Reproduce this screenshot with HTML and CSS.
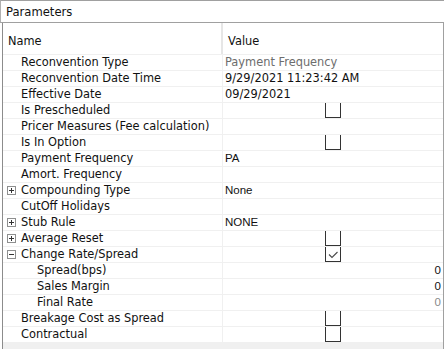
FILE: index.html
```html
<!DOCTYPE html>
<html lang="en">
<head>
    <meta charset="UTF-8">
    <title>Parameters</title>
    <link rel="stylesheet" href="styles.css">
</head>
<body>
    <div class="panel">
        <div class="panel-title">Parameters</div>
        <div class="grid-box">
            <div class="row header">
                <div class="name">Name</div>
                <div class="value">Value</div>
            </div>

            <div class="row">
                <div class="name">Reconvention Type</div>
                <div class="value grey">Payment Frequency</div>
            </div>
            <div class="row">
                <div class="name">Reconvention Date Time</div>
                <div class="value">9/29/2021 11:23:42 AM</div>
            </div>
            <div class="row">
                <div class="name">Effective Date</div>
                <div class="value">09/29/2021</div>
            </div>
            <div class="row">
                <div class="name">Is Prescheduled</div>
                <div class="value check-cell"><span class="checkbox"></span></div>
            </div>
            <div class="row">
                <div class="name">Pricer Measures (Fee calculation)</div>
                <div class="value"></div>
            </div>
            <div class="row">
                <div class="name">Is In Option</div>
                <div class="value check-cell"><span class="checkbox"></span></div>
            </div>
            <div class="row">
                <div class="name">Payment Frequency</div>
                <div class="value sans">PA</div>
            </div>
            <div class="row">
                <div class="name">Amort. Frequency</div>
                <div class="value"></div>
            </div>
            <div class="row">
                <div class="name"><span class="expander plus"></span>Compounding Type</div>
                <div class="value sans">None</div>
            </div>
            <div class="row">
                <div class="name">CutOff Holidays</div>
                <div class="value"></div>
            </div>
            <div class="row">
                <div class="name"><span class="expander plus"></span>Stub Rule</div>
                <div class="value sans">NONE</div>
            </div>
            <div class="row">
                <div class="name"><span class="expander plus"></span>Average Reset</div>
                <div class="value check-cell"><span class="checkbox"></span></div>
            </div>
            <div class="row">
                <div class="name"><span class="expander"></span>Change Rate/Spread</div>
                <div class="value check-cell">
                    <span class="checkbox">
                        <svg width="14" height="14" viewBox="0 0 14 14"><path d="M3 7.5 L6 10.5 L11.5 5" fill="none" stroke="#4a4a4a" stroke-width="1.1"/></svg>
                    </span>
                </div>
            </div>
            <div class="row">
                <div class="name child">Spread(bps)</div>
                <div class="value sans num">0</div>
            </div>
            <div class="row">
                <div class="name child">Sales Margin</div>
                <div class="value sans num">0</div>
            </div>
            <div class="row">
                <div class="name child">Final Rate</div>
                <div class="value sans num grey">0</div>
            </div>
            <div class="row">
                <div class="name">Breakage Cost as Spread</div>
                <div class="value check-cell"><span class="checkbox"></span></div>
            </div>
            <div class="row">
                <div class="name">Contractual</div>
                <div class="value check-cell"><span class="checkbox"></span></div>
            </div>
        </div>
    </div>
</body>
</html>
```

FILE: styles.css
```css
body {
    margin: 0;
    background: #fff;
    font-family: 'DejaVu Sans', sans-serif;
    font-size: 11.4px;
    color: #111;
    overflow: hidden;
}
.panel {
    width: 446px;
    height: 349px;
}
.panel-title {
    border-top: 1px solid #a0a0a0;
    border-left: 1px solid #b0b0b0;
    border-bottom: 1px solid #a0a0a0;
    padding: 2px 0 0 5px;
    height: 19px;
    line-height: 19px;
    font-size: 11.6px;
    margin-right: 2px;
}
.grid-box {
    margin-left: 2px;
    width: 440px;
    height: 326px;
    border-left: 1px solid #8c8c8c;
    border-right: 1px solid #a0a0a0;
    background: #f0f0f0;
}
.row {
    display: grid;
    grid-template-columns: 220px 220px;
    height: 15px;
    line-height: 15px;
    background: #fff;
    border-bottom: 1px solid #f0f0f0;
}
.row.header {
    height: 31px;
}
.header .name,
.header .value {
    padding-top: 11px;
}
.header .name {
    padding-left: 5px;
    border-right: 2px solid #e6e6e6;
}
.header .value {
    padding-left: 5px;
}
.name {
    display: flex;
    align-items: flex-start;
    padding-left: 18px;
    border-right: 1px solid #f0f0f0;
    white-space: nowrap;
}
.name.child {
    padding-left: 34px;
}
.value {
    padding-left: 2px;
    white-space: nowrap;
    display: flex;
}
.value.grey {
    color: #6d6d6d;
}
.value.sans {
    font-family: 'Liberation Sans', sans-serif;
    font-size: 11.5px;
}
.value.num {
    justify-content: flex-end;
    padding-right: 2px;
}
.value.num.grey {
    color: #8a8a8a;
}
.check-cell {
    justify-content: center;
    padding-left: 0;
}
.checkbox {
    width: 14px;
    height: 14px;
    border: 1px solid #333;
    border-top: none;
}
.checkbox svg {
    display: block;
}
.expander {
    position: relative;
    box-sizing: border-box;
    width: 9px;
    height: 9px;
    margin: 3px 5px 0 -14px;
    border: 1px solid #8e8f8f;
    background: #fff;
}
.expander::before {
    content: '';
    position: absolute;
    left: 1px;
    top: 3px;
    width: 5px;
    height: 1px;
    background: #333;
}
.expander.plus::after {
    content: '';
    position: absolute;
    left: 3px;
    top: 1px;
    width: 1px;
    height: 5px;
    background: #333;
}
```
